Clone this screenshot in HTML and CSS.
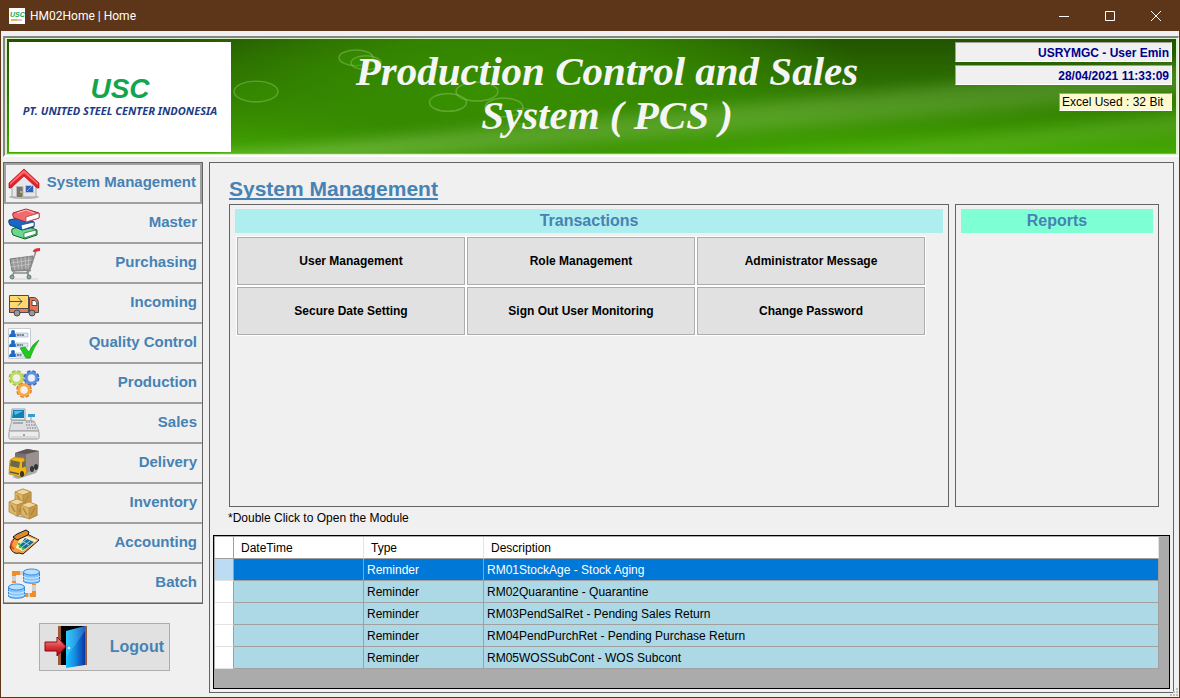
FILE: index.html
```
<!DOCTYPE html>
<html lang="en">
<head>
<meta charset="utf-8">
<title>HM02Home | Home</title>
<link rel="stylesheet" href="styles.css">
</head>
<body>
<div class="window">
  <div class="titlebar">
    <svg class="app-icon" viewBox="0 0 16 16" aria-hidden="true"><rect width="16" height="16" fill="#fff"/><text x="1" y="9" class="app-icon-text">USC</text><path d="M2 12h6" stroke="#efb54b" stroke-width="2"/><path d="M8 12h5" stroke="#b7b7cc" stroke-width="1.500"/></svg>
    <span class="titlebar-text">HM02Home | Home</span>
    <div class="window-controls">
      <button type="button" aria-label="Minimize"><svg viewBox="0 0 12 12"><path d="M1 6.500h10"/></svg></button>
      <button type="button" aria-label="Maximize"><svg viewBox="0 0 12 12"><path d="M1.500 1.500h9v9h-9z"/></svg></button>
      <button type="button" aria-label="Close"><svg viewBox="0 0 12 12"><path d="M1 1l10 10M11 1 1 11"/></svg></button>
    </div>
  </div>

  <header class="banner-frame">
    <div class="banner">
      <svg class="banner-art" viewBox="0 0 1169 115" preserveAspectRatio="none" aria-hidden="true">
        <defs>
          <linearGradient id="base" x1="0" y1="0" x2="0" y2="1"><stop offset="0" stop-color="#225300"/><stop offset=".5" stop-color="#2f7700"/><stop offset="1" stop-color="#43a900"/></linearGradient>
          <radialGradient id="glow"><stop offset="0" stop-color="#378e00"/><stop offset=".45" stop-color="#368a00" stop-opacity=".85"/><stop offset="1" stop-color="#3a9400" stop-opacity="0"/></radialGradient>
          <linearGradient id="fade"><stop offset="0" stop-color="#fff"/><stop offset=".45" stop-color="#999"/><stop offset="1" stop-color="#777"/></linearGradient>
          <mask id="fadeMask" maskUnits="userSpaceOnUse" x="0" y="-50" width="1300" height="300"><rect y="-50" width="1300" height="300" fill="url(#fade)"/></mask>
          <filter id="soft" x="-10%" y="-60%" width="120%" height="220%"><feGaussianBlur stdDeviation="7"/></filter>
        </defs>
        <rect width="1169" height="115" fill="url(#base)"/>
        <ellipse cx="500" cy="48" rx="360" ry="120" fill="url(#glow)"/>
        <g mask="url(#fadeMask)">
          <path d="M210 116Q600 78 1240 18V48Q700 102 210 130z" fill="#a5d67c" opacity=".5" filter="url(#soft)"/>
        </g>
        <path d="M700 125Q950 105 1240 66V90Q1000 112 760 130z" fill="#8aca58" opacity=".25" filter="url(#soft)"/>
        <g fill="#3c9800" fill-opacity=".3" stroke="#a3d27d" stroke-opacity=".38" stroke-width="1.500">
          <ellipse cx="249" cy="53" rx="22" ry="10.500"/>
          <ellipse cx="349" cy="19" rx="17" ry="8"/>
          <ellipse cx="359" cy="24" rx="15" ry="7"/>
          <ellipse cx="441" cy="64" rx="18.500" ry="9"/>
          <ellipse cx="470" cy="53" rx="21" ry="9.500"/>
          <ellipse cx="497" cy="69" rx="19" ry="9.500"/>
          <ellipse cx="517" cy="78" rx="15" ry="8" stroke-opacity=".2"/>
        </g>
      </svg>
      <div class="company">
        <div class="company-mark">USC</div>
        <div class="company-name">PT. UNITED STEEL CENTER INDONESIA</div>
      </div>
      <h1 class="banner-title">Production Control and Sales<br>System ( PCS )</h1>
      <div class="status">
        <div class="status-box">USRYMGC - User Emin</div>
        <div class="status-box">28/04/2021 11:33:09</div>
        <div class="excel-box">Excel Used : 32 Bit</div>
      </div>
    </div>
  </header>

  <div class="content">
    <aside class="sidebar">
      <nav class="menu" aria-label="Modules">
        <button type="button" class="menu-item active">
          <svg viewBox="0 0 32 32" aria-hidden="true"><ellipse cx="16" cy="29" rx="15" ry="2" fill="#bbb"/><path d="M4 15 16 5l12 10v14H4z" fill="#e6e6e8" stroke="#a5a5a8"/><path d="M16 1 1 15v5h2L16 8l13 12h2v-5z" fill="#e5222b" stroke="#ad1019" stroke-width=".7"/><path d="M16 2 2 15v2L16 5l14 12v-2z" fill="#ff6d6d"/><path d="M8.500 18.500h6.500v11H8.500z" fill="#77756d" stroke="#bbb"/><circle cx="13" cy="24" r=".9" fill="#f2d33b"/><path d="M17.500 17.500h8v7h-8z" fill="#2e60b6" stroke="#bcc5d7"/><path d="m19 23 5-5" stroke="#7ca7e7"/></svg>
          <span>System Management</span>
        </button>
        <button type="button" class="menu-item">
          <svg viewBox="0 0 32 32" aria-hidden="true"><g stroke-linejoin="round"><path d="m4 21 12-4 13 5v5l-12 4-12-4q-2-3-1-6z" fill="#69d98a" stroke="#11682d"/><path d="m16 25 12-3v4l-12 4z" fill="#fff" stroke="#11682d" stroke-width=".7"/><path d="m1 12 14-3 11 5v5l-12 3L2 17q-2-3-1-5z" fill="#1769c5" stroke="#103e7b"/><path d="m13 17 13-3v4l-12 4z" fill="#fff" stroke="#1b3d73" stroke-width=".7"/><path d="M5 5 18 1l13 4v5l-13 4L6 10Q4 7 5 5z" fill="#f4696e" stroke="#a22430"/><path d="m18 9 13-4v5l-13 4z" fill="#fff" stroke="#8e3f48" stroke-width=".7"/><path d="m9 5 9-3 8 3" fill="none" stroke="#ffc0bc"/></g></svg>
          <span>Master</span>
        </button>
        <button type="button" class="menu-item">
          <svg viewBox="0 0 32 32" aria-hidden="true"><path d="M5 31h25" stroke="#ddd" stroke-width="1.500"/><path d="m2 11 23-3-3 13-18 2z" fill="#999" stroke="#777"/><path d="m5 11 2 11M9 10l2 12M13 9l1 13M17 9l1 13M21 8l-1 13M3 15l21-3M3 19l20-3" stroke="#d3d3d3" stroke-width=".6"/><path d="m22 21 6-18M4 23l18-1M6 24l-2 5M23 22l-4 2 2 5M5 25h16" fill="none" stroke="#8b8b8b" stroke-width="1.500"/><path d="M26 4q1-2.500 6-2.500" fill="none" stroke="#e33338" stroke-width="3"/><g fill="#8da89c" stroke="#627a70"><circle cx="4" cy="29" r="2"/><circle cx="21" cy="29" r="2"/></g></svg>
          <span>Purchasing</span>
        </button>
        <button type="button" class="menu-item">
          <svg viewBox="0 0 32 32" aria-hidden="true"><g stroke="#4a4a4e"><path d="M1.500 7.500h19v17h-19z" fill="#ffd970"/><path d="M1.500 20.500h19v4h-19z" fill="#ed7958"/><path d="M21.500 9.500h5q4 1 4 7v8h-9z" fill="#e97650"/><path d="M24 12.500h3q2 1 2 5h-5z" fill="#fff"/><path d="M1 13.500h13m-4-4 4 4-4 4" fill="none"/><circle cx="9" cy="25" r="3" fill="#999"/><circle cx="24" cy="25" r="3" fill="#999"/></g></svg>
          <span>Incoming</span>
        </button>
        <button type="button" class="menu-item">
          <svg viewBox="0 0 32 32" aria-hidden="true"><path d="M.5.500h22v30H.5z" fill="#fff" stroke="#c8cbd0"/><g fill="#1f69c5"><circle cx="5" cy="4" r="2"/><path d="M1 9q0-4 4-4t4 4z"/><circle cx="5" cy="14" r="2"/><path d="M1 19q0-4 4-4t4 4z"/><circle cx="5" cy="24" r="2"/><path d="M1 29q0-4 4-4t4 4z"/></g><g fill="#dce9f5" stroke="#9db4cb" stroke-width=".7"><path d="M8 5h12v4H8zM8 15h12v4H8zM8 25h9v4H8z"/></g><path d="M9 7h7M9 17h6M9 27h5" stroke="#222" stroke-dasharray="2 .5"/><path d="m12 20 5-1 4 5q3-8 10-12-6 9-9 18h-4z" fill="#20cb1a" stroke="#148f15" stroke-width=".6"/></svg>
          <span>Quality Control</span>
        </button>
        <button type="button" class="menu-item">
          <svg viewBox="0 0 32 32" aria-hidden="true"><g fill="none" stroke-width="3" stroke-dasharray="3.200 1.830"><circle cx="8.500" cy="10" r="6.400" stroke="#9dba3c"/><circle cx="23.500" cy="10" r="6.400" stroke="#3765b5"/><circle cx="16" cy="22" r="6.400" stroke="#dd7b24"/></g><g fill="none" stroke-width="3.500"><circle cx="8.500" cy="10" r="5" stroke="#bfd864"/><circle cx="23.500" cy="10" r="5" stroke="#5c8ddf"/><circle cx="16" cy="22" r="5" stroke="#f7a643"/></g><g fill="none" stroke="#fff" stroke-opacity=".6"><circle cx="8.500" cy="10" r="3.600"/><circle cx="23.500" cy="10" r="3.600"/><circle cx="16" cy="22" r="3.600"/></g></svg>
          <span>Production</span>
        </button>
        <button type="button" class="menu-item">
          <svg viewBox="0 0 32 32" aria-hidden="true"><path d="m4 12 22 1 5 10H1z" fill="#dcdedf" stroke="#a6aaad"/><path d="M4 1h13v11H3z" fill="#e7eef2" stroke="#8ca2b0"/><path d="M5 2h11v8H4z" fill="#0c83b7"/><path d="m6 3h9l-8 4z" fill="#60bbdc"/><path d="M20 6h7v3h-7z" fill="#3a9ccd"/><path d="M23 9v4" stroke="#999"/><path d="M5 15h10" stroke="#777"/><path d="M18 14h8M18 17h9M19 20h9" stroke="#999" stroke-width="1.500" stroke-dasharray="1.500 1"/><rect x="1" y="23" width="30" height="8" rx="1.500" fill="#ececec" stroke="#999"/><path d="M3 29h26" stroke="#c4c4c4"/><circle cx="16" cy="27" r="1" fill="#888"/></svg>
          <span>Sales</span>
        </button>
        <button type="button" class="menu-item">
          <svg viewBox="0 0 32 32" aria-hidden="true"><path d="m4 29 27-9-3 5-18 6z" fill="#aaa"/><path d="m7 5 12-4 12 2v16l-13 6-11-8z" fill="#797171"/><path d="m18 6 13-3v16l-13 6z" fill="#9a908d"/><path d="m7 5 12-4 12 2-13 3z" fill="#5d5655"/><path d="m2 12 5-3 9 1 3 15-6 4-12-3z" fill="#f2b515" stroke="#ae7e16" stroke-width=".7"/><path d="m3 12 9 2-1 6-9-2zM14 14l3-1 1 5-4 2z" fill="#6b6852"/><path d="m2 24 9 2" stroke="#555" stroke-width="1.500"/><g fill="#343434"><ellipse cx="14" cy="26" rx="2" ry="3"/><ellipse cx="24" cy="21" rx="2" ry="3"/><ellipse cx="28" cy="19" rx="2" ry="3"/></g></svg>
          <span>Delivery</span>
        </button>
        <button type="button" class="menu-item">
          <svg viewBox="0 0 32 32" aria-hidden="true"><path d="m6 28 25-1-9 4z" fill="#aaa"/><g id="crate" stroke="#b3873b" stroke-width=".7"><path d="m7 4 8-3 8 3v10l-8 4-8-4z" fill="#dbb56a"/><path d="m7 4 8-3 8 3-8 3z" fill="#f0d89d"/><path d="m15 7 8-3v10l-8 4z" fill="#c79a4b"/><path d="m9 7 4 7M17 14l4-7" stroke-width="1.500"/></g><use href="#crate" x="-6" y="10"/><use href="#crate" x="6" y="13"/></svg>
          <span>Inventory</span>
        </button>
        <button type="button" class="menu-item">
          <svg viewBox="0 0 32 32" aria-hidden="true"><g stroke="#161616" stroke-linejoin="round"><path d="m9 7 8-2 14 7-16 14-4-1Q5 27 2 19q1-6 7-12z" fill="#f7a13c"/><path d="m12 9 6-2 12 5-15 12-8-4z" fill="#ffecc0" stroke="#e79a31"/><path d="m5 9 4-3 9-4 3 2-1 3-11 5z" fill="#de8b2f"/></g><path d="m17 10 9 4-9 7-6-3z" fill="#166d98"/><path d="m19 11-8 6M22 13l-8 6M14 13l7 4" stroke="#afe7f2" stroke-width=".9"/><g fill="#44c43c"><circle cx="11" cy="16" r="1.300"/><circle cx="12" cy="19" r="1.300"/><circle cx="15" cy="21" r="1.300"/></g><path d="M5 12q-4 6 1 9" fill="none" stroke="#e84522" stroke-width="2"/></svg>
          <span>Accounting</span>
        </button>
        <button type="button" class="menu-item">
          <svg viewBox="0 0 32 32" aria-hidden="true"><path d="M6 15V5h9M17 27h9V16" fill="none" stroke="#f08c2b" stroke-width="4"/><path d="M6 8v5M12 5h3M26 17v6M20 27h2" stroke="#d1d1d3" stroke-width="4"/><g id="database" stroke="#338be0"><path d="M15.500 4v9c0 3 16 3 16 0V4" fill="#83c4ff"/><ellipse cx="23.500" cy="4" rx="8" ry="3" fill="#b9e0ff"/><path d="M15.500 8c0 3 16 3 16 0M15.500 11c0 3 16 3 16 0" fill="none" stroke="#d6edff"/></g><use href="#database" x="-15" y="15"/></svg>
          <span>Batch</span>
        </button>
      </nav>
      <button type="button" class="logout">
        <svg viewBox="0 0 44 44" aria-hidden="true"><defs><linearGradient id="door"><stop offset="0" stop-color="#15c3ff"/><stop offset=".45" stop-color="#168ee1"/><stop offset="1" stop-color="#0736a6"/></linearGradient><linearGradient id="arrow" x1="0" y1="0" x2="0" y2="1"><stop offset="0" stop-color="#f5a0a0"/><stop offset=".55" stop-color="#d83034"/><stop offset="1" stop-color="#a60b10"/></linearGradient></defs><path d="M14 1h29v39H14z" fill="#9b5a3a"/><path d="M17 1h24v39H17z" fill="#000"/><path d="m22 6 19-5v39l-19 3z" fill="url(#door)"/><path d="m22 6 19-5v5L22 33z" fill="#7ae2ff" opacity=".25"/><circle cx="25" cy="23" r="1.200" fill="#e5f3f5"/><path d="M1 17h12v-5l9 9.500-9 9.500v-5H1z" fill="url(#arrow)" stroke="#8e090f"/></svg>
        <span>Logout</span>
      </button>
    </aside>

    <main class="main">
      <h2 class="page-title">System Management</h2>
      <div class="panels">
        <section class="panel">
          <h3 class="panel-head transactions">Transactions</h3>
          <div class="actions">
            <button type="button">User Management</button>
            <button type="button">Role Management</button>
            <button type="button">Administrator Message</button>
            <button type="button">Secure Date Setting</button>
            <button type="button">Sign Out User Monitoring</button>
            <button type="button">Change Password</button>
          </div>
        </section>
        <section class="panel">
          <h3 class="panel-head reports">Reports</h3>
        </section>
      </div>
      <p class="hint">*Double Click to Open the Module</p>
      <div class="grid-view">
        <table class="reminders">
          <colgroup><col class="col-mark"><col class="col-date"><col class="col-type"><col></colgroup>
          <thead>
            <tr><th></th><th>DateTime</th><th>Type</th><th>Description</th></tr>
          </thead>
          <tbody>
            <tr class="selected"><td></td><td></td><td>Reminder</td><td>RM01StockAge - Stock Aging</td></tr>
            <tr><td></td><td></td><td>Reminder</td><td>RM02Quarantine - Quarantine</td></tr>
            <tr><td></td><td></td><td>Reminder</td><td>RM03PendSalRet - Pending Sales Return</td></tr>
            <tr><td></td><td></td><td>Reminder</td><td>RM04PendPurchRet - Pending Purchase Return</td></tr>
            <tr><td></td><td></td><td>Reminder</td><td>RM05WOSSubCont - WOS Subcont</td></tr>
          </tbody>
        </table>
      </div>
    </main>
  </div>
  <svg class="grip" viewBox="0 0 8 8" aria-hidden="true"><path d="M6 0h2v2H6zM6 3h2v2H6zM6 6h2v2H6zM3 6h2v2H3zM0 6h2v2H0zM3 3h2v2H3z"/></svg>
</div>
</body>
</html>
```
FILE: styles.css
```
* {
  box-sizing: border-box;
}

body {
  margin: 0;
  font: 12px/16px "Liberation Sans", Arial, sans-serif;
  color: #000;
  background: #f0f0f0;
}

button {
  margin: 0;
  padding: 0;
  border: 0;
  background: none;
  font: inherit;
  color: inherit;
}

h1, h2, h3, p {
  margin: 0;
}

.window {
  position: relative;
  display: flex;
  flex-direction: column;
  min-height: 100vh;
  border: 1px solid #5d3518;
  border-top: 0;
  background: #f0f0f0;
}

/* Title bar */
.titlebar {
  display: flex;
  align-items: center;
  height: 31px;
  padding-left: 8px;
  background: #5d3518;
  color: #fff;
}

.app-icon {
  width: 16px;
  height: 16px;
}

.app-icon-text {
  font: italic bold 7px "Liberation Sans", Arial, sans-serif;
  fill: #15a24c;
}

.titlebar-text {
  margin-left: 5px;
  font-family: Roboto, "Noto Sans", sans-serif;
}

.window-controls {
  display: flex;
  margin-left: auto;
}

.window-controls button {
  display: grid;
  place-items: center;
  width: 46px;
  height: 31px;
}

.window-controls svg {
  width: 12px;
  height: 12px;
  fill: none;
  stroke: #fff;
}

/* Banner */
.banner-frame {
  margin: 5px 0 0 2px;
  padding: 1px 2px;
  border: 2px solid #f8fff2;
  border-top-color: #858585;
  border-left-color: #858585;
  border-bottom-color: #fff;
  border-right-width: 1px;
  background: #d9f0c8;
}

.banner {
  position: relative;
  display: grid;
  grid-template-columns: 222px 1fr 217px;
  padding: 3px 4px 1px 2px;
  border-bottom: 1px solid #6bbf33;
}

.banner-art {
  position: absolute;
  inset: 0;
  width: 100%;
  height: 100%;
}

.company,
.banner-title,
.status {
  position: relative;
}

.company {
  display: flex;
  flex-direction: column;
  align-items: center;
  justify-content: center;
  height: 110px;
  background: #fff;
}

.company-mark {
  font: italic bold 28px/28px "Liberation Sans", Arial, sans-serif;
  color: #12a550;
}

.company-name {
  font: italic bold 11px/16px "Noto Sans", sans-serif;
  color: #1d3c86;
  white-space: nowrap;
}

.banner-title {
  padding: 7px 0 0 28px;
  font: italic bold 41px/44px "Liberation Serif", "Times New Roman", serif;
  color: #f5f5f5;
  text-align: center;
}

.status {
  display: flex;
  flex-direction: column;
  gap: 3px;
}

.status-box,
.excel-box {
  border: 1px solid #fff;
  border-top-color: #a0a0a0;
  border-left-color: #a0a0a0;
}

.status-box {
  height: 20px;
  padding: 2px;
  background: #f0f0f0;
  color: #00008b;
  font-weight: bold;
  text-align: right;
}

.excel-box {
  align-self: flex-end;
  width: 113px;
  height: 18px;
  margin-top: 5px;
  padding-left: 2px;
  background: #fffacd;
}

/* Content */
.content {
  display: flex;
  flex: 1;
  gap: 6px;
  padding: 5px 5px 4px 2px;
}

.sidebar {
  display: flex;
  flex-direction: column;
  align-items: center;
  flex: none;
  width: 200px;
}

.menu {
  width: 100%;
  border: 1px solid #646464;
}

.menu-item,
.logout,
.page-title,
.panel-head {
  color: #4682b4;
  font-weight: bold;
}

.menu-item {
  display: flex;
  justify-content: space-between;
  width: 100%;
  height: 40px;
  padding: 4px 5px 0 4px;
  border-bottom: 2px solid #a0a0a0;
  font-size: 15px;
}

.menu-item svg {
  width: 32px;
  height: 32px;
}

.menu-item span {
  line-height: 28px;
}

.menu-item.active {
  height: 41px;
  padding: 3px 4px 0 2px;
  border: 2px solid #a0a0a0;
}

.menu-item:last-child {
  height: 39px;
  border-bottom-width: 1px;
}

.logout {
  display: flex;
  align-items: center;
  justify-content: space-between;
  width: 131px;
  height: 48px;
  margin: 19px 0 0 3px;
  padding: 0 5px 0 4px;
  border: 1px solid #adadad;
  background: #e1e1e1;
  font-size: 16px;
}

.logout svg {
  width: 44px;
  height: 44px;
}

.main {
  display: flex;
  flex-direction: column;
  flex: 1;
  min-width: 0;
  padding: 12px 3px 3px;
  border: 1px solid #646464;
}

.page-title {
  padding-left: 16px;
  font-size: 21px;
  line-height: 28px;
  text-decoration: underline 2px;
  text-underline-offset: 2px;
  text-decoration-skip-ink: none;
}

.panels {
  display: grid;
  flex: 1;
  grid-template-columns: 1fr 204px;
  gap: 6px;
  margin-top: 1px;
  padding: 0 11px 0 16px;
}

.panel {
  padding: 4px 5px;
  border: 1px solid #646464;
}

.panel-head {
  font-size: 16px;
  line-height: 24px;
  text-align: center;
}

.transactions {
  background: #afeeee;
}

.reports {
  background: #7fffd4;
}

.actions {
  display: grid;
  grid-template-columns: repeat(3, 1fr);
  gap: 2px;
  padding: 4px 18px 0 2px;
}

.actions button {
  height: 48px;
  border: 1px solid #adadad;
  outline: 1px solid #fff;
  background: #e1e1e1;
  font-weight: bold;
}

.hint {
  padding: 3px 15px 9px;
}

/* Reminder grid */
.grid-view {
  padding: 1px 10px 19px 1px;
  border: 1px solid #000;
  background: #ababab;
}

.reminders {
  width: 100%;
  border-collapse: separate;
  border-spacing: 0;
  table-layout: fixed;
}

.col-mark {
  width: 19px;
}

.col-date {
  width: 130px;
}

.col-type {
  width: 120px;
}

.reminders th,
.reminders td {
  height: 22px;
  padding: 0 3px;
  border-right: 1px solid #a0a0a0;
  border-bottom: 1px solid #a0a0a0;
  line-height: 20px;
  text-align: left;
}

.reminders th {
  padding: 0 7px;
  border-right-color: #e3e3e3;
  background: #fff;
  font-weight: normal;
}

.reminders th:first-child {
  border-right-color: #a0a0a0;
}

.reminders td {
  background: #add8e6;
}

.reminders td:first-child {
  border-bottom-color: #e3e3e3;
  background: #fff;
}

.reminders .selected td {
  background: #0078d7;
  color: #fff;
}

.reminders .selected td:first-child {
  background: #bcdcf4;
}

.grip {
  position: absolute;
  right: 1px;
  bottom: 1px;
  width: 8px;
  height: 8px;
  fill: #bfbfbf;
}
```
